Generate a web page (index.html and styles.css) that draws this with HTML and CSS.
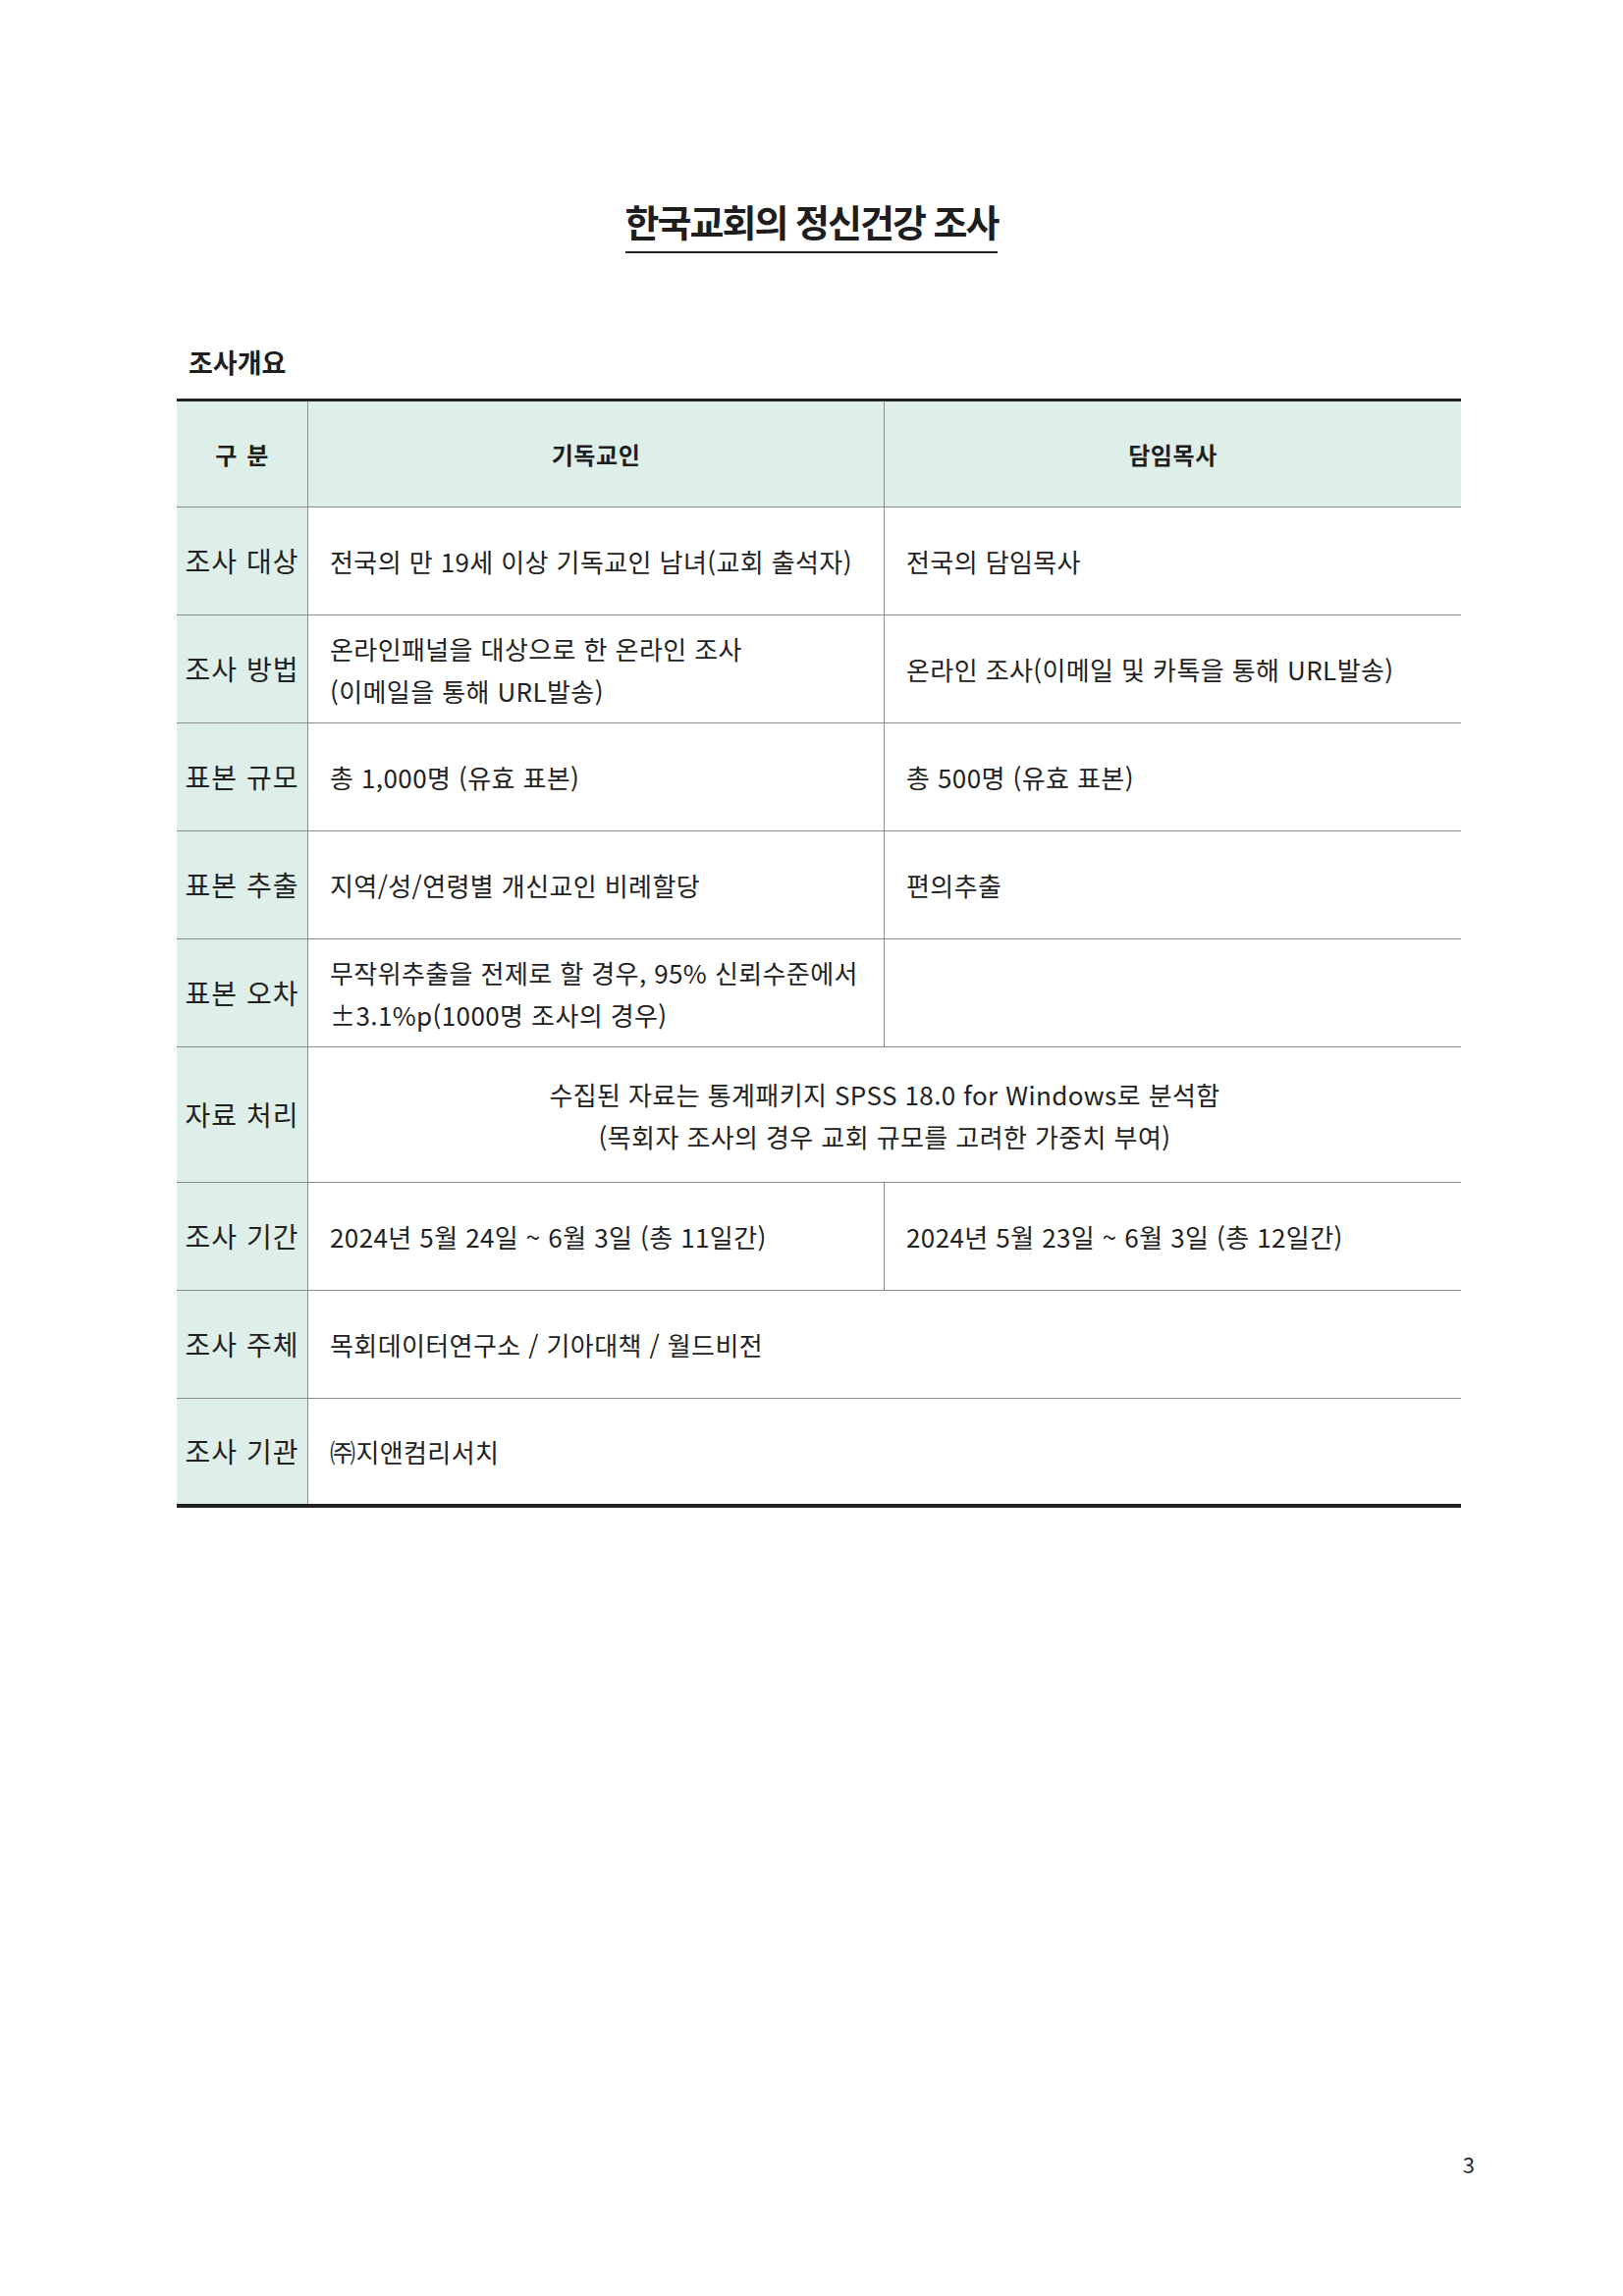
FILE: index.html
```html
<!DOCTYPE html>
<html lang="ko">
<head>
<meta charset="utf-8">
<title>한국교회의 정신건강 조사</title>
<link rel="stylesheet" href="styles.css">
</head>
<body>
<div class="page">
  <div class="title-wrap"><h1 class="title">한국교회의 정신건강 조사</h1></div>
  <h2 class="section">조사개요</h2>
  <div class="grid">
    <div class="cell head lab">구 분</div>
    <div class="cell head mid">기독교인</div>
    <div class="cell head">담임목사</div>

    <div class="cell lab">조사 대상</div>
    <div class="cell txt mid">전국의 만 19세 이상 기독교인 남녀(교회 출석자)</div>
    <div class="cell txt">전국의 담임목사</div>

    <div class="cell lab">조사 방법</div>
    <div class="cell txt mid">온라인패널을 대상으로 한 온라인 조사<br>(이메일을 통해 URL발송)</div>
    <div class="cell txt">온라인 조사(이메일 및 카톡을 통해 URL발송)</div>

    <div class="cell lab">표본 규모</div>
    <div class="cell txt mid">총 1,000명 (유효 표본)</div>
    <div class="cell txt">총 500명 (유효 표본)</div>

    <div class="cell lab">표본 추출</div>
    <div class="cell txt mid">지역/성/연령별 개신교인 비례할당</div>
    <div class="cell txt">편의추출</div>

    <div class="cell lab">표본 오차</div>
    <div class="cell txt mid">무작위추출을 전제로 할 경우, 95% 신뢰수준에서<br>±3.1%p(1000명 조사의 경우)</div>
    <div class="cell txt"></div>

    <div class="cell lab">자료 처리</div>
    <div class="cell span center">수집된 자료는 통계패키지 SPSS 18.0 for Windows로 분석함<br>(목회자 조사의 경우 교회 규모를 고려한 가중치 부여)</div>

    <div class="cell lab">조사 기간</div>
    <div class="cell txt mid">2024년 5월 24일 ~ 6월 3일 (총 11일간)</div>
    <div class="cell txt">2024년 5월 23일 ~ 6월 3일 (총 12일간)</div>

    <div class="cell lab">조사 주체</div>
    <div class="cell txt span">목회데이터연구소 / 기아대책 / 월드비전</div>

    <div class="cell lab last">조사 기관</div>
    <div class="cell txt span last">㈜지앤컴리서치</div>
  </div>
  <div class="pageno">3</div>
</div>
</body>
</html>
```

FILE: styles.css
```css
html, body {
  margin: 0;
  padding: 0;
  background: #ffffff;
}

.page {
  width: 1653px;
  min-height: 2339px;
  box-sizing: border-box;
  display: flex;
  flex-direction: column;
  font-family: "Noto Sans CJK KR", "Noto Sans", sans-serif;
  color: #222222;
  padding-top: 205px;
}

.title-wrap {
  text-align: center;
}

.title {
  display: inline-block;
  margin: 0;
  font-size: 38px;
  line-height: 40px;
  font-weight: 700;
  letter-spacing: -2px;
  padding-bottom: 11px;
  border-bottom: 2px solid #222222;
  color: #1e1e1e;
}

.section {
  margin: 97px 0 0 192px;
  font-size: 27px;
  line-height: 27px;
  font-weight: 700;
  color: #1e1e1e;
}

.grid {
  margin: 24px 0 0 180px;
  width: 1308px;
  display: grid;
  grid-template-columns: 134px 587px 587px;
  grid-template-rows: 108px repeat(5, 110px) 138px 110px 110px 107px;
  border-top: 3px solid #222222;
  border-bottom: 4px solid #222222;
}

.cell {
  box-sizing: border-box;
  border-bottom: 1px solid #8c8c8c;
  display: flex;
  align-items: center;
  font-size: 26px;
  letter-spacing: 0.4px;
  line-height: 43px;
  color: #222222;
}

.head {
  background: #deefe9;
  justify-content: center;
  font-weight: 700;
  font-size: 24px;
  letter-spacing: 0.6px;
  color: #1e1e1e;
}

.lab {
  background: #deefe9;
  border-right: 1px solid #8c8c8c;
  justify-content: center;
  font-size: 28px;
  letter-spacing: 1px;
}

.lab.head {
  font-size: 24px;
  letter-spacing: 0.6px;
  word-spacing: 2px;
}

.mid {
  border-right: 1px solid #8c8c8c;
}

.txt {
  padding-left: 22px;
}

.span {
  grid-column: span 2;
}

.center {
  justify-content: center;
  text-align: center;
}

.last {
  border-bottom: none;
}

.pageno {
  margin-top: auto;
  padding: 0 151px 124px 0;
  text-align: right;
  font-size: 22px;
  line-height: 22px;
  color: #2a2d35;
}
```
